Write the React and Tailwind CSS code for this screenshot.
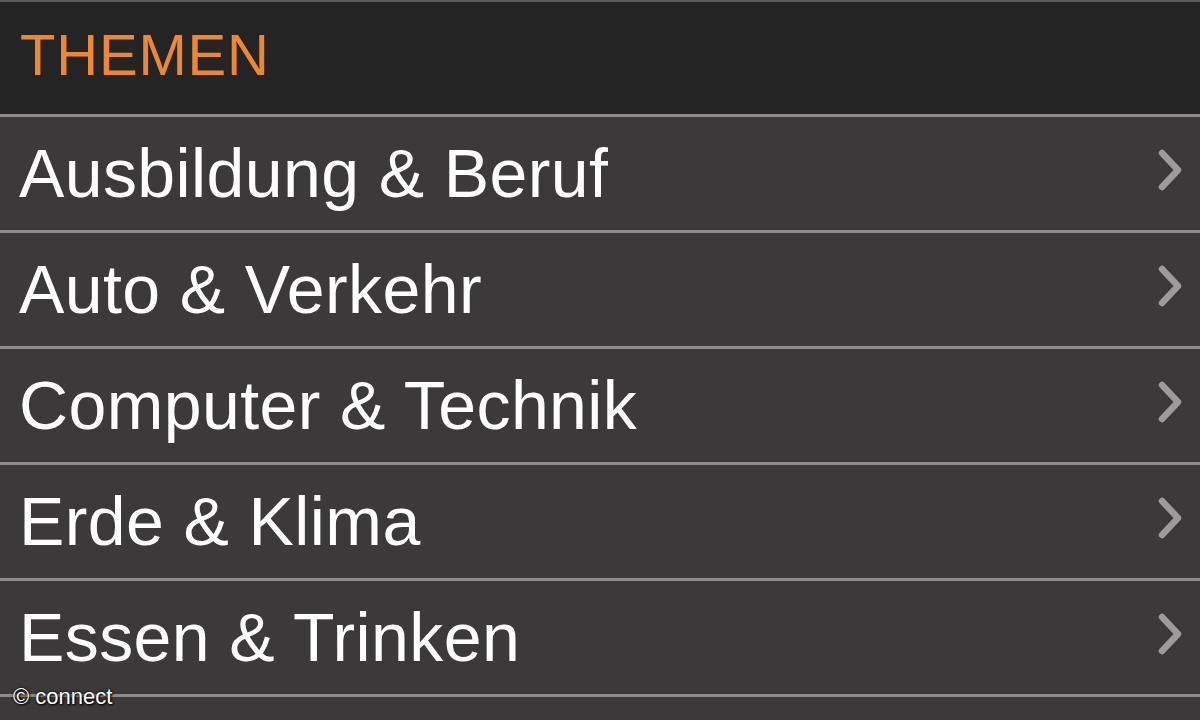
import React from 'react';

const topics = [
  'Ausbildung & Beruf',
  'Auto & Verkehr',
  'Computer & Technik',
  'Erde & Klima',
  'Essen & Trinken',
];

function Chevron() {
  return (
    <svg width="28" height="42" viewBox="0 0 28 42" className="shrink-0">
      <path d="M6 4 L22 21 L6 38" fill="none" stroke="#9d9b9c" strokeWidth="6.5" strokeLinecap="round" strokeLinejoin="round" />
    </svg>
  );
}

export default function App() {
  return (
    <div
      className="relative w-[1200px] h-[720px] overflow-hidden bg-[#3b393a]"
      style={{ fontFamily: '"Liberation Sans", Arial, sans-serif' }}
    >
      <div className="h-[2px] bg-[#5c5c5c]" />
      <div className="h-[112px] bg-[#252424] flex items-center pl-[20px] pb-[6px]">
        <span className="text-[58px] leading-none text-[#ee8830] tracking-[0.8px]">THEMEN</span>
      </div>
      {topics.map((t) => (
        <div key={t}>
          <div className="h-[3px] bg-[#8d8b8c]" />
          <div className="h-[113px] flex items-center justify-between pl-[19px] pr-[16px]">
            <span className="text-[68px] leading-none text-white pb-[2px] tracking-[0.4px]">{t}</span>
            <div className="pb-[8px]">
              <Chevron />
            </div>
          </div>
        </div>
      ))}
      <div className="h-[3px] bg-[#8d8b8c]" />

      <div
        className="absolute left-[13px] top-[686px] text-[22px] text-white leading-none"
        style={{ textShadow: '1px 1px 2px #000, 0 0 3px #000' }}
      >
        © connect
      </div>
    </div>
  );
}
